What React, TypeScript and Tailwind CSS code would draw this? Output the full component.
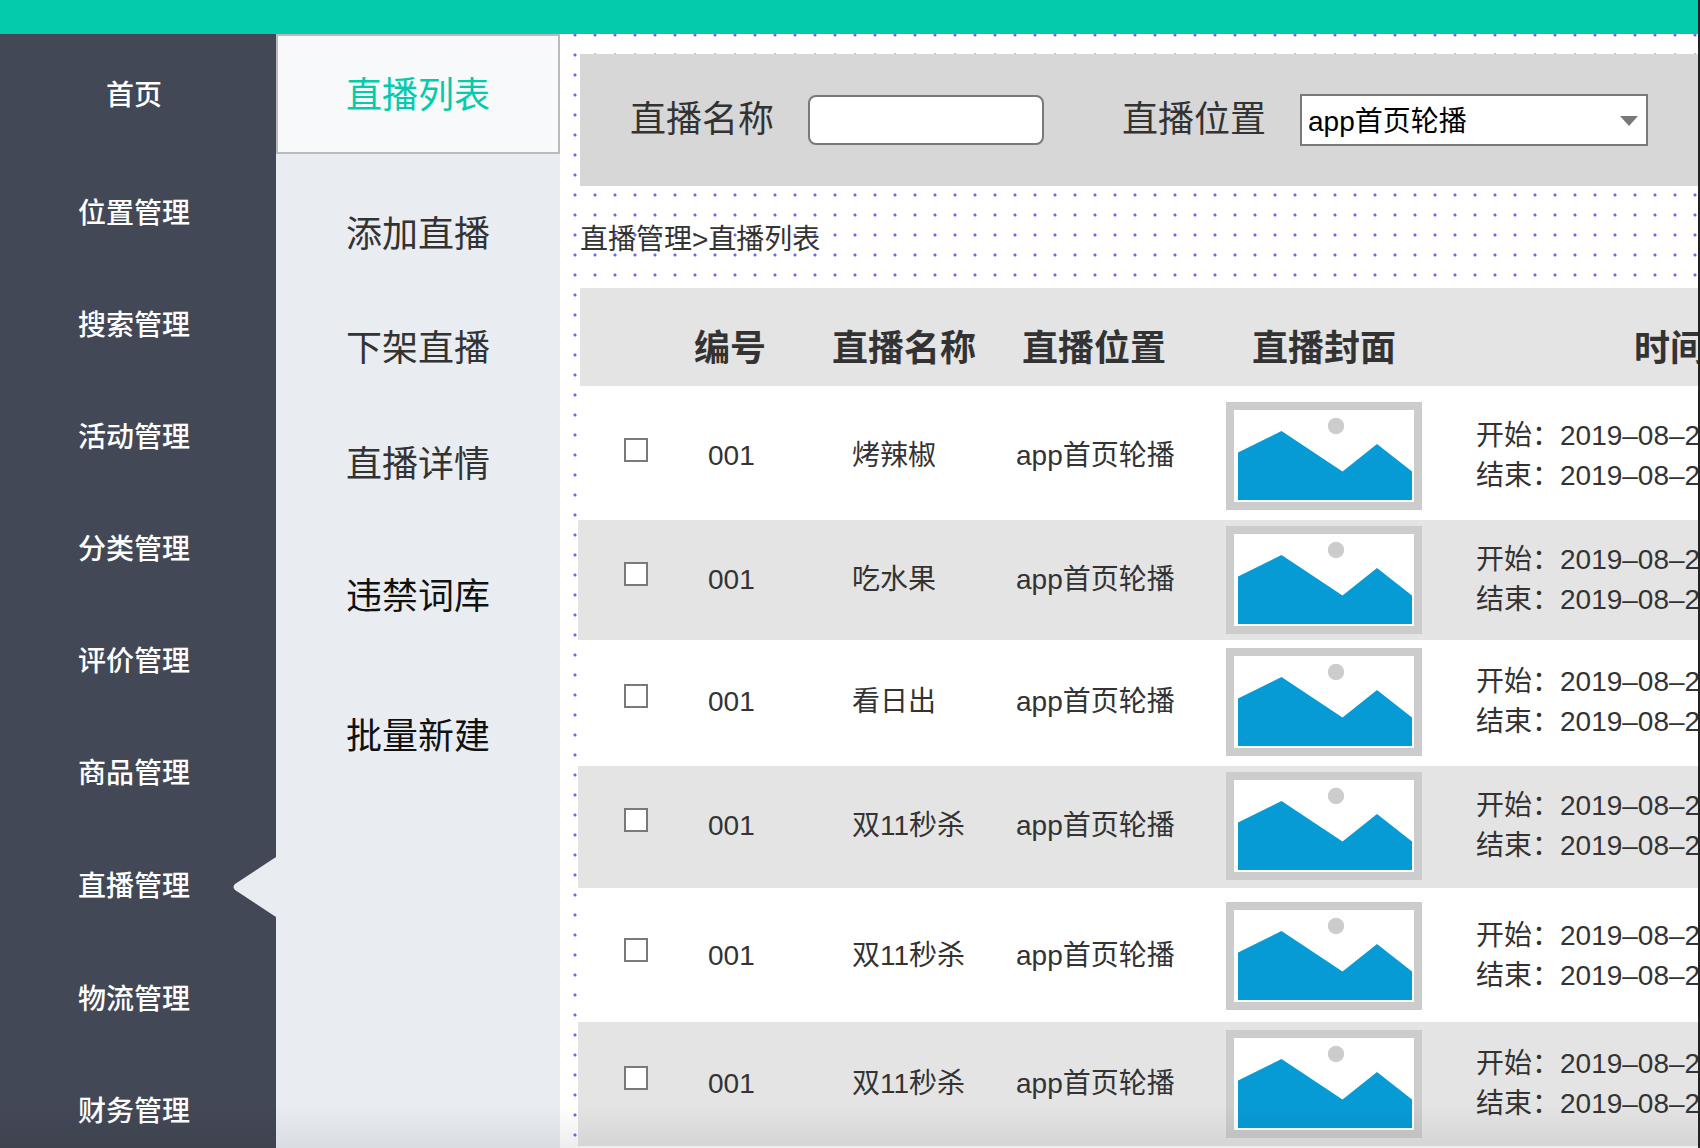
import clsx from 'clsx';

const navItems = [
  '首页',
  '位置管理',
  '搜索管理',
  '活动管理',
  '分类管理',
  '评价管理',
  '商品管理',
  '直播管理',
  '物流管理',
  '财务管理',
];

const subItems = [
  { name: '添加直播', className: 'mt-[54px] text-[#333]' },
  { name: '下架直播', className: 'mt-15 text-[#333]' },
  { name: '直播详情', className: 'mt-[62px] text-[#333]' },
  { name: '违禁词库', className: 'mt-[78px] text-[#111]' },
  { name: '批量新建', className: 'mt-[86px] text-[#111]' },
];

const rows = [
  { id: '001', name: '烤辣椒', pad: 'pt-4 pb-[10px]' },
  { id: '001', name: '吃水果', pad: 'py-[6px]' },
  { id: '001', name: '看日出', pad: 'pt-2 pb-[10px]' },
  { id: '001', name: '双11秒杀', pad: 'pt-[6px] pb-2' },
  { id: '001', name: '双11秒杀', pad: 'pt-[14px] pb-3' },
  { id: '001', name: '双11秒杀', pad: 'py-2' },
];

function Cover() {
  return (
    <svg width="196" height="108" viewBox="0 0 196 108" className="block" role="img" aria-label="封面">
      <rect x="4" y="4" width="188" height="100" fill="#fff" stroke="#ccc" strokeWidth="8" />
      <circle cx="110" cy="24" r="8.2" fill="#ccc" />
      <path d="M12 50.5 55.5 29 116.5 69.5 151 42 186 69.5V98H12Z" fill="#079bd6" />
    </svg>
  );
}

export default function App() {
  return (
    <div className="relative flex min-h-screen flex-col overflow-hidden border-r-2 border-[#222] bg-white font-['Liberation_Sans','Noto_Sans_CJK_SC',sans-serif] text-[28px] leading-10 text-[#333]">
      <header className="h-[34px] shrink-0 bg-[#04cbab]" />

      <div className="flex flex-1">
        {/* Main nav */}
        <nav className="w-[276px] shrink-0 bg-[#434856] font-medium text-white">
          {navItems.map((item, i) => (
            <a
              key={item}
              href="#"
              className={clsx(
                'relative flex items-center justify-center pr-2',
                i === 0 ? 'h-[124px]' : item === '直播管理' ? 'h-[114px]' : 'h-28'
              )}
            >
              {item}
              {item === '直播管理' && (
                <svg width="43" height="60" viewBox="0 0 43 60" className="absolute right-0">
                  <path d="M43 0 2 27Q-1 30 2 33L43 60Z" fill="#e9edf2" />
                </svg>
              )}
            </a>
          ))}
        </nav>

        {/* Sub menu */}
        <nav className="w-[284px] shrink-0 bg-[#e9edf2] text-center text-[36px] leading-[54px]">
          <a
            href="#"
            className="flex h-[120px] items-center justify-center border-2 border-[#bbb] bg-[#f7f9fb] pt-1 text-[#04cbab]"
          >
            直播列表
          </a>
          {subItems.map((item) => (
            <a key={item.name} href="#" className={clsx('block', item.className)}>
              {item.name}
            </a>
          ))}
        </nav>

        <main className="min-w-0 flex-1 overflow-hidden bg-[radial-gradient(circle,#6666ff_1px,transparent_2px)] bg-[size:20px_20px] bg-[position:5px_11px] pt-5">
          {/* Search bar */}
          <form className="ml-5 flex h-[132px] items-center bg-[#d7d7d7] pl-[50px] text-[36px]">
            <label htmlFor="live-name" className="shrink-0">
              直播名称
            </label>
            <input
              id="live-name"
              type="text"
              className="ml-[34px] h-[50px] w-[236px] shrink-0 rounded-lg border-2 border-[#797979] bg-white px-2 text-[28px]"
            />
            <label htmlFor="live-position" className="ml-[78px] shrink-0">
              直播位置
            </label>
            <div className="relative ml-[34px] shrink-0">
              <select
                id="live-position"
                className="block h-[52px] w-[348px] appearance-none rounded-none border-2 border-[#797979] bg-white pt-1 pl-[6px] text-[28px] text-black"
              >
                <option>app首页轮播</option>
              </select>
              <svg
                width="18"
                height="10"
                viewBox="0 0 18 10"
                className="pointer-events-none absolute top-[22px] right-[10px]"
              >
                <path d="M0 0H18L9 10Z" fill="#797979" />
              </svg>
            </div>
          </form>

          <p className="mt-[34px] ml-5">直播管理&gt;直播列表</p>

          {/* Live list */}
          <table className="mt-7 ml-[18px] w-[1340px] table-fixed border-separate border-spacing-0 text-left whitespace-nowrap">
            <colgroup>
              <col className="w-[116px]" />
              <col className="w-[138px]" />
              <col className="w-[184px]" />
              <col className="w-[210px]" />
              <col className="w-[196px]" />
              <col className="w-[496px]" />
            </colgroup>
            <thead className="text-[36px]">
              <tr className="h-[98px] bg-[#e4e4e4]">
                <th className="border-l-2 border-white p-0" />
                <th className="p-0 pt-6">编号</th>
                <th className="p-0 pt-6">直播名称</th>
                <th className="p-0 pt-6 pl-[6px]">直播位置</th>
                <th className="p-0 pt-6 text-center">直播封面</th>
                <th className="p-0 pt-6 text-center">时间</th>
              </tr>
            </thead>
            <tbody>
              {rows.map((row, i) => (
                <tr key={i} className="bg-white even:bg-[#e4e4e4]">
                  <td className={clsx('pl-[46px]', row.pad)}>
                    <input
                      type="checkbox"
                      aria-label={row.name}
                      className="mb-3 block size-6 appearance-none border-2 border-[#797979] bg-white"
                    />
                  </td>
                  <td className={clsx('pl-[14px]', row.pad)}>{row.id}</td>
                  <td className={clsx('pl-5', row.pad)}>{row.name}</td>
                  <td className={row.pad}>app首页轮播</td>
                  <td className={row.pad}>
                    <Cover />
                  </td>
                  <td className={clsx('pl-[54px]', row.pad)}>
                    <p>开始：2019–08–2</p>
                    <p>结束：2019–08–2</p>
                  </td>
                </tr>
              ))}
            </tbody>
          </table>
        </main>
      </div>

      <div className="pointer-events-none absolute inset-x-0 bottom-0 h-16 bg-linear-to-t from-black/10 to-transparent" />
    </div>
  );
}
